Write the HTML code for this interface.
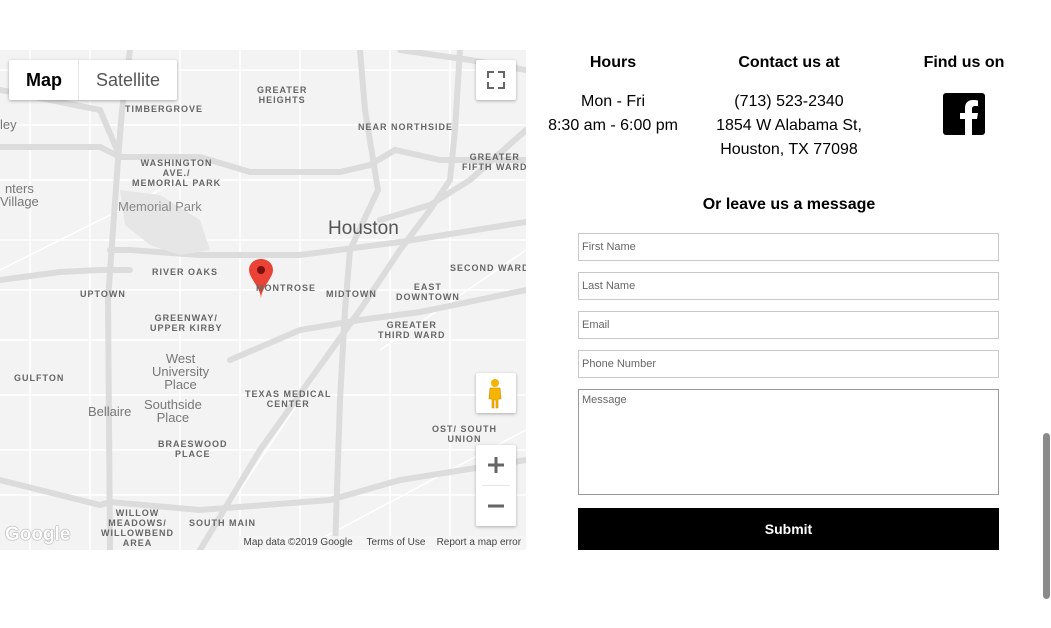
<!DOCTYPE html>
<html><head><meta charset="utf-8"><style>
*{margin:0;padding:0;box-sizing:border-box}
body{width:1051px;height:628px;background:#fff;position:relative;overflow:hidden;font-family:"Liberation Sans",Arial,sans-serif;color:#000}
.map{position:absolute;left:0;top:50px;width:526px;height:500px;background:#f3f3f3;overflow:hidden}
.map svg{position:absolute;left:0;top:0}
.lb{position:absolute;font-size:9px;font-weight:bold;color:#666;letter-spacing:1px;text-align:center;line-height:10px;white-space:nowrap}
.lt{position:absolute;font-size:13px;color:#777;text-align:center;line-height:13px;white-space:nowrap}
.ctl{position:absolute;background:#fff;box-shadow:0 1px 3px rgba(0,0,0,.3);border-radius:2px}
.h{position:absolute;font-size:16px;font-weight:bold;text-align:center;width:200px}
.t{position:absolute;font-size:16px;text-align:center;width:200px;line-height:24px}
.in{position:absolute;left:578px;width:421px;height:28px;border:1px solid #c8c8c8;font-size:11px;color:#666;padding:7px 3px}
</style></head><body>
<div class="map">
<svg width="526" height="500" viewBox="0 0 526 500">
<g stroke="#fff" stroke-width="1.5" fill="none">
<path d="M0 20H526M0 75H526M0 130H526M0 190H526M0 240H526M0 290H526M0 345H526M0 400H526M0 445H526"/>
<path d="M30 0V500M90 0V500M180 0V500M240 0V500M300 0V500M390 0V500M450 0V500"/>
<path d="M0 220L180 130M200 500L360 260M300 500L526 380M380 300L526 200"/>
</g>
<g stroke="#dcdcdc" stroke-width="6" fill="none" stroke-linecap="round">
<path d="M0 97H100L120 107H200L250 122H340L370 115L395 100L440 110L526 110"/>
<path d="M130 0L122 60L118 110L108 250L110 500"/>
<path d="M110 200H130L200 205L300 205L400 192L526 172"/>
<path d="M0 40L100 60L120 107"/>
<path d="M0 230L60 222L100 220L130 220"/>
<path d="M360 0L365 60L378 140L350 200L345 260L340 350L335 500"/>
<path d="M460 0L455 80L450 130L430 160L400 200L360 260L260 400L200 500"/>
<path d="M230 310L300 280L360 270L420 262L526 240"/>
<path d="M0 430L100 455L110 452L200 460L330 450L400 430L526 410"/>
<path d="M526 20L470 10L400 0"/>
<path d="M526 80L470 130L430 155L380 170"/>
</g>
<path d="M120 140L160 145L200 170L210 200L180 205L150 195L125 175Z" fill="#e6e6e6"/>
</svg>
<div class="ctl" style="left:9px;top:10px;width:168px;height:40px"></div>
<div style="position:absolute;left:9px;top:10px;width:70px;height:40px;font-size:18px;line-height:40px;text-align:center;color:#000;font-weight:bold">Map</div>
<div style="position:absolute;left:78px;top:10px;width:1px;height:40px;background:#e6e6e6"></div>
<div style="position:absolute;left:79px;top:10px;width:98px;height:40px;font-size:18px;line-height:40px;text-align:center;color:#555">Satellite</div>
<div class="ctl" style="left:476px;top:10px;width:40px;height:40px">
<svg width="40" height="40"><g stroke="#666" stroke-width="2" fill="none"><path d="M12 18V12H18M22 12H28V18M28 22V28H22M18 28H12V22"/></g></svg></div>
<div class="ctl" style="left:476px;top:323px;width:40px;height:40px">
<svg width="40" height="40"><circle cx="19" cy="10" r="4" fill="#f4b400"/><path d="M14 15H24L25 26H22V35H20V27H18V35H16V26H13Z" fill="#f4b400" stroke="#d08a00" stroke-width=".6"/></svg></div>
<div class="ctl" style="left:476px;top:395px;width:40px;height:81px">
<svg width="40" height="81"><path d="M20 12V28M12 20H28M12 61H28" stroke="#666" stroke-width="3"/><path d="M6 40.5H34" stroke="#e6e6e6"/></svg></div>
<svg style="left:248px;top:208px" width="26" height="42" viewBox="0 0 26 42"><path d="M13 1C6 1 1 6 1 12C1 20 13 30 13 41C13 30 25 20 25 12C25 6 20 1 13 1Z" fill="#ea4335"/><circle cx="13" cy="12" r="4" fill="#7a0f0f"/></svg>
<div class="lb" style="left:257px;top:35px">GREATER<br>HEIGHTS</div>
<div class="lb" style="left:125px;top:54px">TIMBERGROVE</div>
<div class="lb" style="left:358px;top:72px">NEAR NORTHSIDE</div>
<div class="lb" style="left:462px;top:102px">GREATER<br>FIFTH WARD</div>
<div class="lb" style="left:132px;top:108px">WASHINGTON<br>AVE./<br>MEMORIAL PARK</div>
<div class="lt" style="left:118px;top:150px;color:#888">Memorial Park</div>
<div class="lt" style="left:0px;top:132px">nters<br>Village</div>
<div class="lt" style="left:0px;top:68px">ley</div>
<div style="position:absolute;left:328px;top:168px;font-size:19px;color:#555">Houston</div>
<div class="lb" style="left:152px;top:217px">RIVER OAKS</div>
<div class="lb" style="left:450px;top:213px">SECOND WARD</div>
<div class="lb" style="left:80px;top:239px">UPTOWN</div>
<div class="lb" style="left:256px;top:233px">MONTROSE</div>
<div class="lb" style="left:326px;top:239px">MIDTOWN</div>
<div class="lb" style="left:396px;top:232px">EAST<br>DOWNTOWN</div>
<div class="lb" style="left:150px;top:263px">GREENWAY/<br>UPPER KIRBY</div>
<div class="lb" style="left:378px;top:270px">GREATER<br>THIRD WARD</div>
<div class="lt" style="left:152px;top:302px">West<br>University<br>Place</div>
<div class="lb" style="left:14px;top:323px">GULFTON</div>
<div class="lt" style="left:88px;top:355px">Bellaire</div>
<div class="lt" style="left:144px;top:348px">Southside<br>Place</div>
<div class="lb" style="left:245px;top:339px">TEXAS MEDICAL<br>CENTER</div>
<div class="lb" style="left:432px;top:374px">OST/ SOUTH<br>UNION</div>
<div class="lb" style="left:158px;top:389px">BRAESWOOD<br>PLACE</div>
<div class="lb" style="left:101px;top:458px">WILLOW<br>MEADOWS/<br>WILLOWBEND<br>AREA</div>
<div class="lb" style="left:189px;top:468px">SOUTH MAIN</div>
<div style="position:absolute;left:5px;top:474px;font-size:19px;font-weight:bold;color:#fff;text-shadow:0 0 1px #777,0 0 1px #777">Google</div>
<div style="position:absolute;left:238px;top:486px;width:288px;height:14px;background:rgba(245,245,245,.8);font-size:10px;color:#444;line-height:14px;white-space:nowrap">&nbsp;&nbsp;Map data ©2019 Google&nbsp;&nbsp;&nbsp;&nbsp;&nbsp;Terms of Use&nbsp;&nbsp;&nbsp;&nbsp;Report a map error</div>
</div>
<div class="h" style="left:513px;top:54px">Hours</div>
<div class="h" style="left:689px;top:54px">Contact us at</div>
<div class="h" style="left:864px;top:54px">Find us on</div>
<div class="t" style="left:513px;top:90px">Mon - Fri<br>8:30 am - 6:00 pm</div>
<div class="t" style="left:689px;top:90px">(713) 523-2340<br>1854 W Alabama St,<br>Houston, TX 77098</div>
<svg style="position:absolute;left:943px;top:93px" width="42" height="42" viewBox="0 0 42 42"><rect width="42" height="42" rx="3" fill="#000"/><path d="M29 42V26H34L35 20H29V16C29 14 30 13 32 13H35V7.5C34 7.3 32 7 30 7C25 7 22 10 22 15V20H17V26H22V42Z" fill="#fff"/></svg>
<div class="h" style="left:639px;top:196px;width:300px">Or leave us a message</div>
<div class="in" style="top:233px">First Name</div>
<div class="in" style="top:272px">Last Name</div>
<div class="in" style="top:311px">Email</div>
<div class="in" style="top:350px">Phone Number</div>
<div class="in" style="top:389px;height:106px;border-color:#999;padding-top:4px">Message</div>
<div style="position:absolute;left:578px;top:508px;width:421px;height:42px;background:#000;color:#fff;font-size:14px;font-weight:bold;text-align:center;line-height:42px">Submit</div>
<div style="position:absolute;left:1043px;top:433px;width:7px;height:166px;background:#8a8a8a;border-radius:4px"></div>
</body></html>
